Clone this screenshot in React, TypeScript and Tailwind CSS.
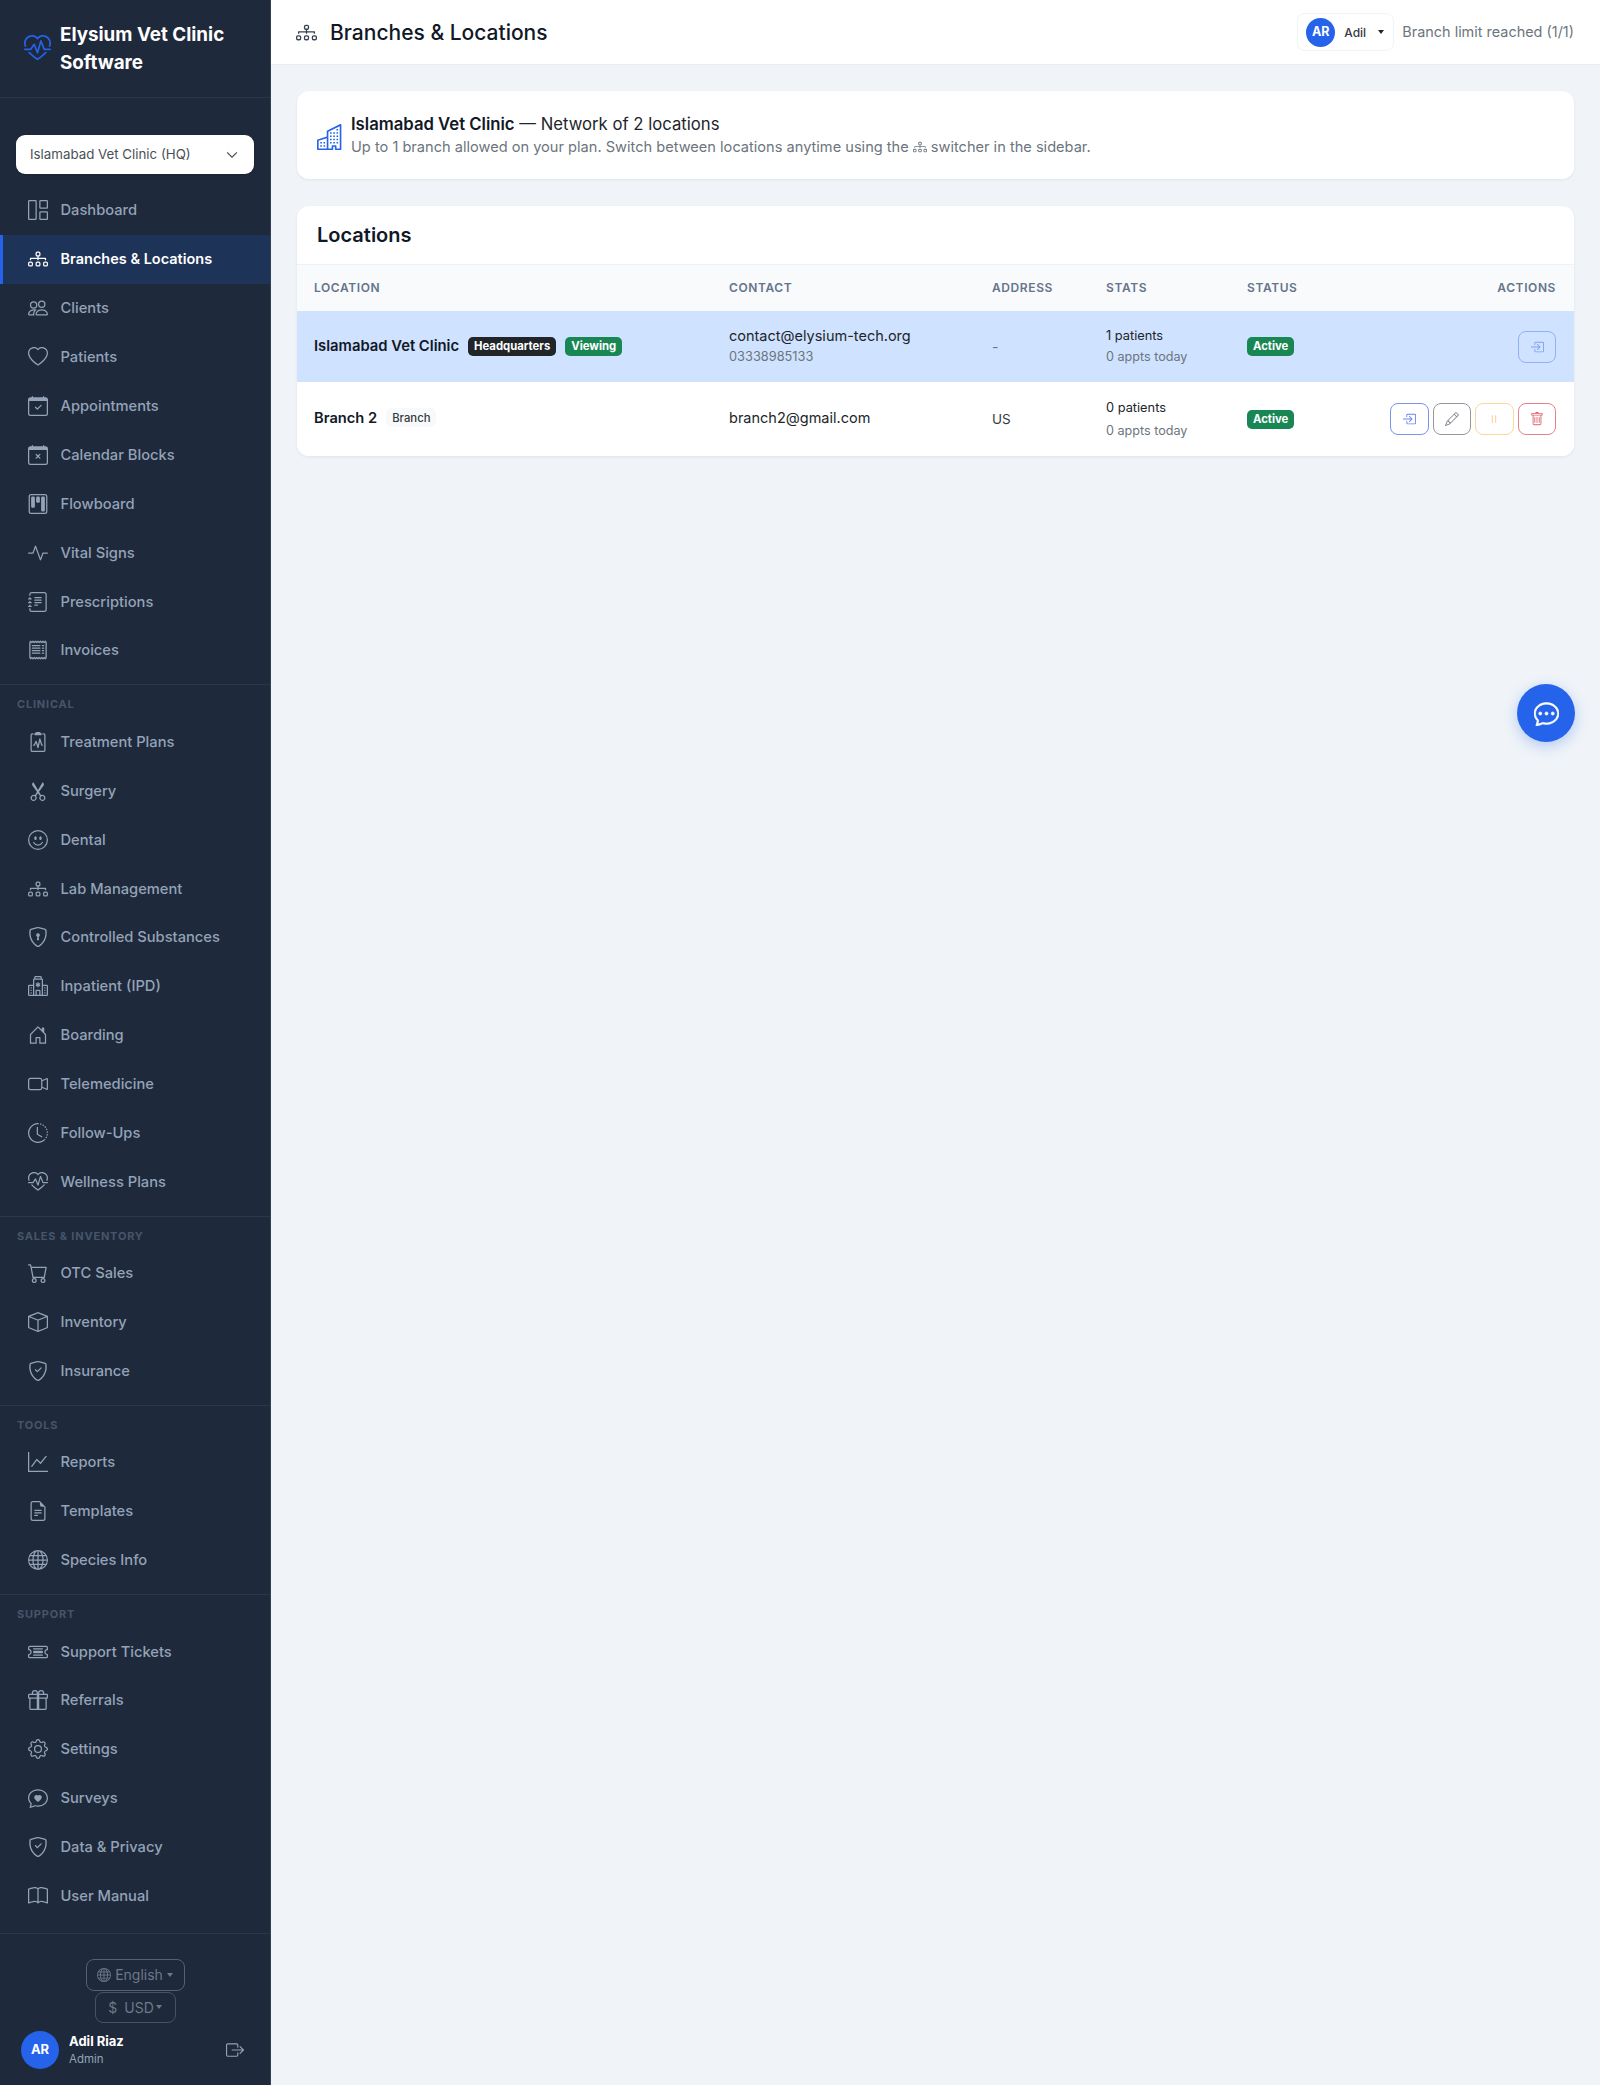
import React from "react";
import {
  BsActivity, BsBook, BsBox, BsBoxArrowInRight, BsBoxArrowRight, BsBuildings, BsCalendarCheck, BsCalendarX,
  BsCameraVideo, BsCart, BsChatDots, BsChatHeart, BsChevronDown, BsClipboard2Pulse, BsClockHistory, BsDiagram3,
  BsEmojiSmile, BsFileEarmarkText, BsGear, BsGift, BsGlobe, BsGraphUp, BsGrid1X2, BsHeart, BsHeartPulse,
  BsHospital, BsHouseDoor, BsJournalText, BsKanban, BsPause, BsPencil, BsPeople, BsReceipt, BsScissors,
  BsShieldCheck, BsShieldLock, BsTicketDetailed, BsTrash,
} from "react-icons/bs";

const sections = [
  {
    items: [
      { label: "Dashboard", icon: BsGrid1X2 },
      { label: "Branches & Locations", icon: BsDiagram3, active: true },
      { label: "Clients", icon: BsPeople },
      { label: "Patients", icon: BsHeart },
      { label: "Appointments", icon: BsCalendarCheck },
      { label: "Calendar Blocks", icon: BsCalendarX },
      { label: "Flowboard", icon: BsKanban },
      { label: "Vital Signs", icon: BsActivity },
      { label: "Prescriptions", icon: BsJournalText },
      { label: "Invoices", icon: BsReceipt },
    ],
  },
  {
    title: "Clinical",
    items: [
      { label: "Treatment Plans", icon: BsClipboard2Pulse },
      { label: "Surgery", icon: BsScissors },
      { label: "Dental", icon: BsEmojiSmile },
      { label: "Lab Management", icon: BsDiagram3 },
      { label: "Controlled Substances", icon: BsShieldLock },
      { label: "Inpatient (IPD)", icon: BsHospital },
      { label: "Boarding", icon: BsHouseDoor },
      { label: "Telemedicine", icon: BsCameraVideo },
      { label: "Follow-Ups", icon: BsClockHistory },
      { label: "Wellness Plans", icon: BsHeartPulse },
    ],
  },
  {
    title: "Sales & Inventory",
    items: [
      { label: "OTC Sales", icon: BsCart },
      { label: "Inventory", icon: BsBox },
      { label: "Insurance", icon: BsShieldCheck },
    ],
  },
  {
    title: "Tools",
    items: [
      { label: "Reports", icon: BsGraphUp },
      { label: "Templates", icon: BsFileEarmarkText },
      { label: "Species Info", icon: BsGlobe },
    ],
  },
  {
    title: "Support",
    items: [
      { label: "Support Tickets", icon: BsTicketDetailed },
      { label: "Referrals", icon: BsGift },
      { label: "Settings", icon: BsGear },
      { label: "Surveys", icon: BsChatHeart },
      { label: "Data & Privacy", icon: BsShieldCheck },
      { label: "User Manual", icon: BsBook },
    ],
  },
];

const Caret = ({ className }: { className: string }) => (
  <span className={"inline-block w-0 h-0 border-x-[3.5px] border-x-transparent border-t-[4px] " + className} />
);

const Sidebar = () => (
  <aside className="w-[271px] shrink-0 bg-[#1e293b] border-r border-[#334155]">
    <div className="h-[98px] border-b border-[#2b3648] flex items-center pl-[24px] pr-[30px] gap-[9px]">
      <BsHeartPulse className="text-[#2563eb] text-[27px] shrink-0 mb-[1px]" />
      <div className="text-white font-bold text-[18.8px] leading-[28px] pt-[1px]">Elysium Vet Clinic Software</div>
    </div>

    <div className="mx-[16px] mt-[37px] mb-[12px] h-[39px] bg-white rounded-[9px] flex items-center justify-between pl-[14px] pr-[16px] shadow">
      <span className="text-[13.3px] text-[#495057]">Islamabad Vet Clinic (HQ)</span>
      <BsChevronDown className="text-[#343a40] text-[12px] stroke-[0.6px]" />
    </div>

    {sections.map((section, i) => (
      <div key={i} className={section.title ? "mt-[9.5px] border-t border-[#2b3648]" : ""}>
        {section.title && (
          <div className="h-[32px] pb-[2px] pt-[8px] pl-[17px] flex items-center text-[11px] font-bold uppercase tracking-[0.8px] text-[#475569]">
            {section.title}
          </div>
        )}
        {section.items.map((item) => {
          const Icon = item.icon;
          return (
            <div
              key={item.label}
              className={
                "h-[48.9px] flex items-center pl-[28px] gap-[12.5px] relative " +
                (item.active ? "bg-[#1e3358] text-white font-semibold text-[14.5px]" : "text-[#94a3b8] font-medium text-[14.7px]")
              }
            >
              {item.active && <span className="absolute left-0 top-0 bottom-0 w-[3px] bg-[#2563eb]" />}
              <Icon className="text-[20px] shrink-0" />
              <span>{item.label}</span>
            </div>
          );
        })}
      </div>
    ))}

    <div className="mt-[12px] border-t border-[#2b3648] pt-[25px] flex flex-col items-center">
      <div className="w-[99px] h-[32px] border border-[#556070] rounded-[8px] flex items-center justify-center gap-[4px] text-[14px] text-[#6d7888]">
        <BsGlobe className="text-[14px]" />
        <span>English</span>
        <Caret className="border-t-[#6d7888]" />
      </div>
      <div className="mt-[1px] w-[81px] h-[31px] border border-[#475262] rounded-[8px] flex items-center justify-center gap-[2px] text-[14px] text-[#6d7888]">
        <span className="mr-[5px]">$</span>
        <span>USD</span>
        <Caret className="border-t-[#6d7888]" />
      </div>
      <div className="w-full mt-[8px] pl-[21px] pr-[26px] flex items-center">
        <div className="w-[38px] h-[38px] rounded-full bg-[#2563eb] text-white text-[13px] font-bold flex items-center justify-center">
          AR
        </div>
        <div className="ml-[10px] flex-1">
          <div className="text-white text-[13px] font-bold leading-[18px]">Adil Riaz</div>
          <div className="text-[#94a3b8] text-[11.5px] leading-[18px]">Admin</div>
        </div>
        <BsBoxArrowRight className="text-[#94a3b8] text-[18px]" />
      </div>
    </div>
  </aside>
);

const Header = () => (
  <header className="h-[65px] bg-white border-b border-[#e9edf2] flex items-center pl-[25px] pr-[26px]">
    <BsDiagram3 className="text-[#343f52] text-[21px]" />
    <h1 className="ml-[13px] mt-[1px] text-[21px] font-medium text-[#111827]">Branches &amp; Locations</h1>
    <div className="ml-auto h-[38px] w-[97px] border border-[#f1f3f5] rounded-[8px] flex items-center pl-[8px]">
      <div className="w-[29px] h-[29px] rounded-full bg-[#2563eb] text-white text-[12.5px] font-bold flex items-center justify-center">
        AR
      </div>
      <span className="ml-[9px] mt-[1px] text-[12px] font-medium text-[#343a40]">Adil</span>
      <Caret className="ml-[12px] border-t-[#212529]" />
    </div>
    <span className="ml-[8px] text-[14.45px] text-[#6c757d]">Branch limit reached (1/1)</span>
  </header>
);

const Badge = ({ className, children }: { className: string; children: React.ReactNode }) => (
  <span className={"inline-flex items-center h-[19px] px-[6px] rounded-[5px] text-[11.3px] font-bold align-middle " + className}>
    {children}
  </span>
);

const ActionBtn = ({ className, children }: { className: string; children: React.ReactNode }) => (
  <span className={"w-[38.5px] h-[32px] border rounded-[8px] flex items-center justify-center text-[14px] " + className}>
    {children}
  </span>
);

const Th = ({ children, className = "" }: { children: React.ReactNode; className?: string }) => (
  <th className={"px-[18px] text-left text-[12px] font-semibold uppercase tracking-[0.6px] text-[#64748b] " + className}>
    {children}
  </th>
);

const Table = () => (
  <table className="w-full table-fixed border-collapse">
    <colgroup>
      <col className="w-[414px]" />
      <col className="w-[263px]" />
      <col className="w-[114px]" />
      <col className="w-[141px]" />
      <col className="w-[140px]" />
      <col />
    </colgroup>
    <thead>
      <tr className="h-[46px] bg-[#f8fafc]">
        <Th className="!pl-[17px]">Location</Th>
        <Th>Contact</Th>
        <Th>Address</Th>
        <Th>Stats</Th>
        <Th>Status</Th>
        <Th className="!text-right">Actions</Th>
      </tr>
    </thead>
    <tbody>
      <tr className="h-[71px] bg-[#cfe2ff]">
        <td className="pl-[17px] pr-[18px]">
          <div className="flex items-center pb-[1px]">
            <span className="text-[14.8px] font-semibold text-[#111827]">Islamabad Vet Clinic</span>
            <Badge className="ml-[9px] bg-[#212529] text-white">Headquarters</Badge>
            <Badge className="ml-[9px] bg-[#198754] text-white">Viewing</Badge>
          </div>
        </td>
        <td className="px-[18px]">
          <div className="pb-[1px]">
            <div className="text-[14.5px] leading-[21px] text-[#212529]">contact@elysium-tech.org</div>
            <div className="text-[12.8px] leading-[21px] text-[#6c757d]">03338985133</div>
          </div>
        </td>
        <td className="px-[18px] text-[14px] text-[#6c757d]">-</td>
        <td className="px-[18px]">
          <div className="text-[12.8px] leading-[21px] text-[#212529]">1 patients</div>
          <div className="text-[12.6px] leading-[22px] text-[#6c757d]">0 appts today</div>
        </td>
        <td className="px-[18px]">
          <div className="flex">
            <Badge className="bg-[#198754] text-white">Active</Badge>
          </div>
        </td>
        <td className="pl-[17px] pr-[18px]">
          <div className="flex justify-end">
            <ActionBtn className="border-[#8fb2f5] text-[#7f9ff0]">
              <BsBoxArrowInRight />
            </ActionBtn>
          </div>
        </td>
      </tr>
      <tr className="h-[74px] bg-white">
        <td className="pl-[17px] pr-[18px]">
          <div className="flex items-center pb-[2px]">
            <span className="text-[14.7px] font-semibold text-[#111827]">Branch 2</span>
            <Badge className="ml-[9px] bg-[#f8f9fa] text-[#343a40] !font-medium">Branch</Badge>
          </div>
        </td>
        <td className="px-[18px] pb-[2px] text-[14.5px] text-[#212529]">branch2@gmail.com</td>
        <td className="px-[18px] text-[13.5px] text-[#343a40]">US</td>
        <td className="px-[18px]">
          <div className="text-[12.8px] leading-[22px] text-[#212529]">0 patients</div>
          <div className="text-[12.6px] leading-[23px] text-[#6c757d]">0 appts today</div>
        </td>
        <td className="px-[18px]">
          <div className="flex">
            <Badge className="bg-[#198754] text-white">Active</Badge>
          </div>
        </td>
        <td className="pl-[17px] pr-[18px]">
          <div className="flex justify-end gap-[4px]">
            <ActionBtn className="border-[#7c93ee] text-[#6a83ea]">
              <BsBoxArrowInRight />
            </ActionBtn>
            <ActionBtn className="border-[#94989e] text-[#7f858c]">
              <BsPencil />
            </ActionBtn>
            <ActionBtn className="border-[#fdd79b] text-[#fbc77e]">
              <BsPause />
            </ActionBtn>
            <ActionBtn className="border-[#e6808a] text-[#dc5f6b]">
              <BsTrash />
            </ActionBtn>
          </div>
        </td>
      </tr>
    </tbody>
  </table>
);

const App = () => {
  return (
    <div className="flex min-h-screen bg-[#f0f4f8] font-[Inter,sans-serif]">
      <Sidebar />
      <div className="flex-1 min-w-0">
        <Header />
        <main className="pl-[26px] pr-[26px] pt-[26px]">
          <div className="h-[88px] bg-white rounded-[12px] shadow-[0_1px_3px_rgba(15,23,42,0.07)] flex items-center pl-[20px]">
            <BsBuildings className="text-[#2563eb] text-[26px] mt-[4px]" />
            <div className="ml-[8px] pb-[1px]">
              <div className="text-[16.7px] leading-[24px] text-[#212529]">
                <span className="font-semibold text-[#111827]">Islamabad Vet Clinic</span> — Network of 2 locations
              </div>
              <div className="text-[14.6px] leading-[22px] text-[#6c757d] flex items-center">
                Up to 1 branch allowed on your plan. Switch between locations anytime using the
                <BsDiagram3 className="mx-[4px] text-[14px]" />
                switcher in the sidebar.
              </div>
            </div>
          </div>

          <div className="mt-[27px] bg-white rounded-[12px] shadow-[0_1px_3px_rgba(15,23,42,0.07)] overflow-hidden">
            <div className="h-[59px] pl-[20px] flex items-center border-b border-[#eef1f5] text-[20px] font-semibold text-[#111827]">
              Locations
            </div>
            <Table />
          </div>
        </main>
      </div>

      <div className="fixed left-[1517px] top-[684px] w-[58px] h-[58px] rounded-full bg-[#2563eb] flex items-center justify-center shadow-[0_4px_14px_rgba(37,99,235,0.3)]">
        <BsChatDots className="text-white text-[25px] stroke-[0.4px]" />
      </div>
    </div>
  );
};

export default App;
